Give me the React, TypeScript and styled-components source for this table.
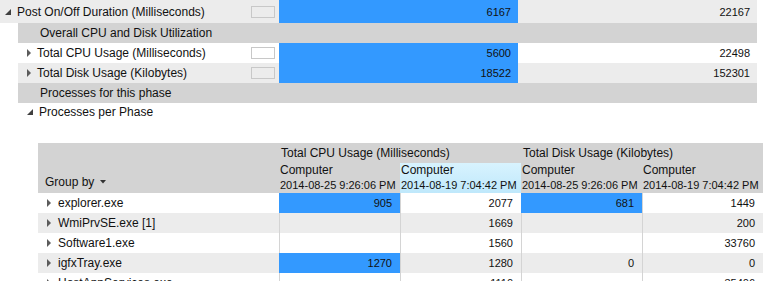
import React from "react";
import styled, { createGlobalStyle } from "styled-components";

const GlobalStyle = createGlobalStyle`
  html, body { margin: 0; padding: 0; background: #fff; overflow: hidden; }
  body {
    font-family: "Segoe UI", "Liberation Sans", Arial, sans-serif;
    font-size: 12px;
    color: #111;
  }
`;

const BLUE = "#3399ff";
const ALT = "#ececec";
const GROUP = "#d3d3d3";

const Page = styled.div`
  width: 767px;
  height: 281px;
  overflow: hidden;
`;

const Summary = styled.div`
  display: flex;
  flex-direction: column;
  width: 757px;
`;

const SumRow = styled.div<{ $indent?: boolean; $bg: string; $h?: number }>`
  display: grid;
  grid-template-columns: ${(p) => (p.$indent ? "261px" : "279px")} 239px 239px;
  margin-left: ${(p) => (p.$indent ? "18px" : "0")};
  height: ${(p) => p.$h ?? 20}px;
  background: ${(p) => p.$bg};
  align-items: stretch;
`;

const GroupRow = styled.div`
  margin-left: 18px;
  height: 20px;
  background: ${GROUP};
  display: flex;
  align-items: center;
  padding-left: 22px;
`;

const PlainRow = styled.div`
  margin-left: 18px;
  height: 17px;
  display: flex;
  align-items: center;
  padding-left: 9px;
  gap: 6px;
`;

const LabelCell = styled.div<{ $pad: number }>`
  display: flex;
  align-items: center;
  padding-left: ${(p) => p.$pad}px;
  gap: 6px;
  white-space: nowrap;
`;

const SwatchBox = styled.span`
  margin-left: auto;
  margin-right: 4px;
  width: 22px;
  height: 10px;
  border: 1px solid #c8c8c8;
  background: transparent;
`;

const NumCell = styled.div<{ $blue?: boolean }>`
  display: flex;
  align-items: center;
  justify-content: flex-end;
  padding-right: 7px;
  font-size: 11px;
  background: ${(p) => (p.$blue ? BLUE : "transparent")};
`;

const Table = styled.div`
  margin-top: 23px;
  margin-left: 38px;
  width: 725px;
`;

const Header = styled.div`
  display: grid;
  grid-template-columns: 241px 121px 121px 121px 121px;
  grid-template-rows: 20px 30px;
  background: ${GROUP};
`;

const GroupByCell = styled.div`
  grid-row: 1 / span 2;
  grid-column: 1;
  align-self: end;
  padding: 0 0 4px 7px;
  display: flex;
  align-items: center;
  gap: 6px;
`;

const SpanHead = styled.div<{ $col: number }>`
  grid-row: 1;
  grid-column: ${(p) => p.$col} / span 2;
  display: flex;
  align-items: center;
  padding-left: 2px;
  white-space: nowrap;
`;

const SubHead = styled.div<{ $col: number; $hot?: boolean }>`
  grid-row: 2;
  grid-column: ${(p) => p.$col};
  padding-left: 1px;
  line-height: 15px;
  white-space: nowrap;
  overflow: hidden;
  display: flex;
  flex-direction: column;
  background: ${(p) => (p.$hot ? "linear-gradient(#d8f3fe, #bfe8fb)" : "transparent")};
`;

const Stamp = styled.span`
  font-size: 11px;
`;

const DataRow = styled.div<{ $alt: boolean }>`
  display: grid;
  grid-template-columns: 241px 121px 121px 121px 121px;
  height: 20px;
  background: ${(p) => (p.$alt ? ALT : "#fff")};
`;

const NameCell = styled.div`
  display: flex;
  align-items: center;
  padding-left: 9px;
  gap: 7px;
  white-space: nowrap;
`;

const ValueCell = styled.div<{ $blue?: boolean }>`
  display: flex;
  align-items: center;
  justify-content: flex-end;
  padding-right: 8px;
  font-size: 11px;
  border-left: 1px solid ${(p) => (p.$blue ? BLUE : "#d4d4d4")};
  background: ${(p) => (p.$blue ? BLUE : "transparent")};
`;

const Collapsed = () => (
  <svg width="4" height="8" viewBox="0 0 4 8" style={{ flex: "none" }}>
    <path d="M0 0 L4 4 L0 8 Z" fill="#5b5b5b" />
  </svg>
);

const Expanded = () => (
  <svg width="6" height="6" viewBox="0 0 6 6" style={{ flex: "none" }}>
    <path d="M6 0 L6 6 L0 6 Z" fill="#404040" />
  </svg>
);

const Caret = () => (
  <svg width="6" height="4" viewBox="0 0 6 4" style={{ flex: "none" }}>
    <path d="M0 0 L6 0 L3 3.5 Z" fill="#333" />
  </svg>
);

type Row = { name: string; v: (string | null)[]; blue: boolean[] };

const rows: Row[] = [
  { name: "explorer.exe", v: ["905", "2077", "681", "1449"], blue: [true, false, true, false] },
  { name: "WmiPrvSE.exe [1]", v: [null, "1669", null, "200"], blue: [false, false, false, false] },
  { name: "Software1.exe", v: [null, "1560", null, "33760"], blue: [false, false, false, false] },
  { name: "igfxTray.exe", v: ["1270", "1280", "0", "0"], blue: [true, false, false, false] },
  { name: "HostAppServices.exe", v: [null, "1110", null, "35406"], blue: [false, false, false, false] },
];

export default function App() {
  return (
    <Page>
      <GlobalStyle />
      <Summary>
        <SumRow $bg={ALT} $h={23}>
          <LabelCell $pad={5}>
            <Expanded />
            <span>Post On/Off Duration (Milliseconds)</span>
            <SwatchBox />
          </LabelCell>
          <NumCell $blue>6167</NumCell>
          <NumCell>22167</NumCell>
        </SumRow>
        <GroupRow>Overall CPU and Disk Utilization</GroupRow>
        <SumRow $indent $bg="#fff">
          <LabelCell $pad={9}>
            <Collapsed />
            <span>Total CPU Usage (Milliseconds)</span>
            <SwatchBox />
          </LabelCell>
          <NumCell $blue>5600</NumCell>
          <NumCell>22498</NumCell>
        </SumRow>
        <SumRow $indent $bg={ALT}>
          <LabelCell $pad={9}>
            <Collapsed />
            <span>Total Disk Usage (Kilobytes)</span>
            <SwatchBox />
          </LabelCell>
          <NumCell $blue>18522</NumCell>
          <NumCell>152301</NumCell>
        </SumRow>
        <GroupRow>Processes for this phase</GroupRow>
        <PlainRow>
          <Expanded />
          <span>Processes per Phase</span>
        </PlainRow>
      </Summary>

      <Table>
        <Header>
          <GroupByCell>
            <span>Group by</span>
            <Caret />
          </GroupByCell>
          <SpanHead $col={2}>Total CPU Usage (Milliseconds)</SpanHead>
          <SpanHead $col={4}>Total Disk Usage (Kilobytes)</SpanHead>
          <SubHead $col={2}><span>Computer</span><Stamp>2014-08-25 9:26:06 PM</Stamp></SubHead>
          <SubHead $col={3} $hot><span>Computer</span><Stamp>2014-08-19 7:04:42 PM</Stamp></SubHead>
          <SubHead $col={4}><span>Computer</span><Stamp>2014-08-25 9:26:06 PM</Stamp></SubHead>
          <SubHead $col={5}><span>Computer</span><Stamp>2014-08-19 7:04:42 PM</Stamp></SubHead>
        </Header>
        {rows.map((r, i) => (
          <DataRow key={r.name} $alt={i % 2 === 1}>
            <NameCell>
              <Collapsed />
              <span>{r.name}</span>
            </NameCell>
            {r.v.map((v, j) => (
              <ValueCell key={j} $blue={r.blue[j]}>{v ?? ""}</ValueCell>
            ))}
          </DataRow>
        ))}
      </Table>
    </Page>
  );
}
